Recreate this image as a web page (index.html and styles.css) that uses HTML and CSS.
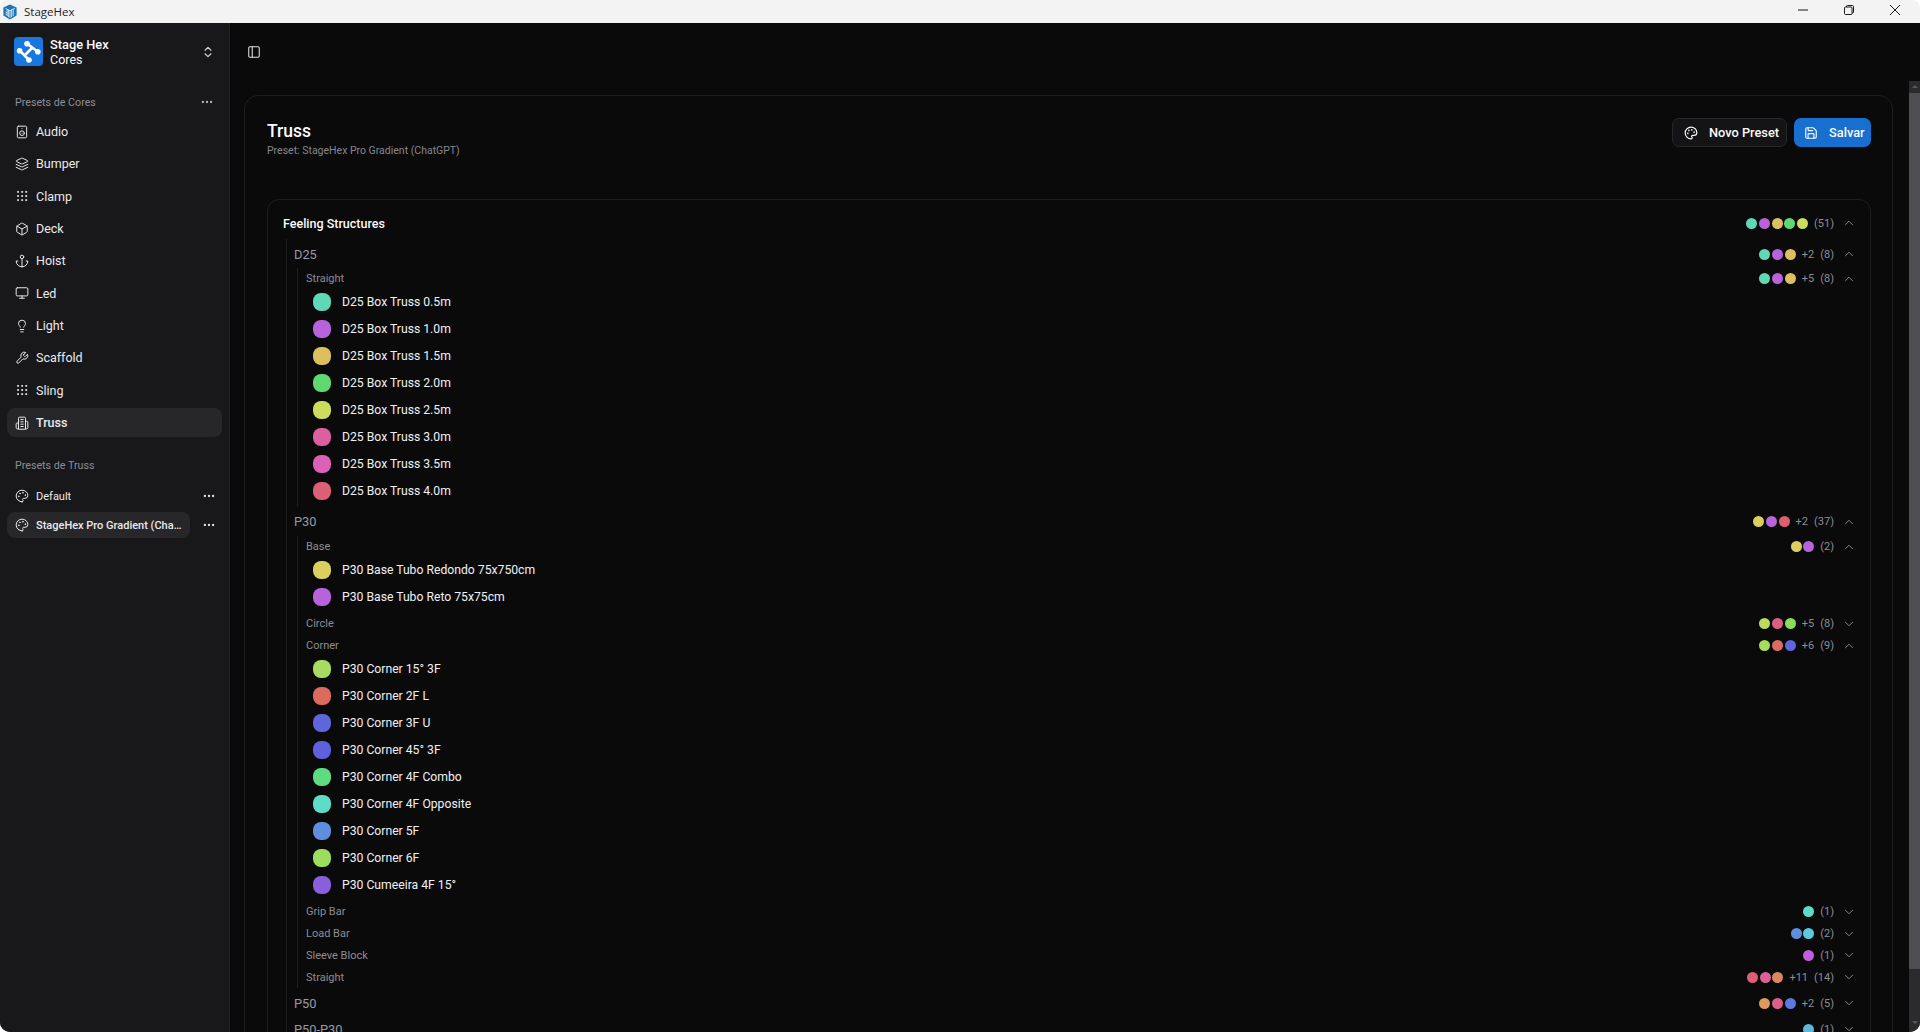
FILE: index.html
```html
<!DOCTYPE html>
<html lang="pt-BR">
<head>
<meta charset="utf-8">
<title>StageHex</title>
<link rel="stylesheet" href="styles.css">
</head>
<body>
<svg class="defs" aria-hidden="true">
  <defs>
    <symbol id="i-speaker" viewBox="0 0 24 24"><rect x="4" y="2" width="16" height="20" rx="2"/><path d="M12 6h.01"/><circle cx="12" cy="14" r="4"/><path d="M12 14h.01"/></symbol>
    <symbol id="i-layers" viewBox="0 0 24 24"><path d="m12.83 2.18a2 2 0 0 0-1.66 0L2.6 6.08a1 1 0 0 0 0 1.83l8.58 3.91a2 2 0 0 0 1.66 0l8.58-3.9a1 1 0 0 0 0-1.83Z"/><path d="m22 17.65-9.17 4.16a2 2 0 0 1-1.66 0L2 17.65"/><path d="m22 12.65-9.17 4.16a2 2 0 0 1-1.66 0L2 12.65"/></symbol>
    <symbol id="i-grip" viewBox="0 0 24 24"><circle cx="12" cy="12" r="1"/><circle cx="19" cy="12" r="1"/><circle cx="5" cy="12" r="1"/><circle cx="12" cy="5" r="1"/><circle cx="19" cy="5" r="1"/><circle cx="5" cy="5" r="1"/><circle cx="12" cy="19" r="1"/><circle cx="19" cy="19" r="1"/><circle cx="5" cy="19" r="1"/></symbol>
    <symbol id="i-box" viewBox="0 0 24 24"><path d="M21 8a2 2 0 0 0-1-1.73l-7-4a2 2 0 0 0-2 0l-7 4A2 2 0 0 0 3 8v8a2 2 0 0 0 1 1.73l7 4a2 2 0 0 0 2 0l7-4A2 2 0 0 0 21 16Z"/><path d="m3.3 7 8.7 5 8.7-5"/><path d="M12 22V12"/></symbol>
    <symbol id="i-anchor" viewBox="0 0 24 24"><path d="M12 22V8"/><path d="M5 12H2a10 10 0 0 0 20 0h-3"/><circle cx="12" cy="5" r="3"/></symbol>
    <symbol id="i-monitor" viewBox="0 0 24 24"><rect x="2" y="3" width="20" height="14" rx="2"/><path d="M8 21h8"/><path d="M12 17v4"/></symbol>
    <symbol id="i-bulb" viewBox="0 0 24 24"><path d="M15 14c.2-1 .7-1.7 1.5-2.5 1-.9 1.5-2.2 1.5-3.5A6 6 0 0 0 6 8c0 1 .2 2.2 1.5 3.5.7.7 1.3 1.5 1.5 2.5"/><path d="M9 18h6"/><path d="M10 22h4"/></symbol>
    <symbol id="i-wrench" viewBox="0 0 24 24"><path d="M14.7 6.3a1 1 0 0 0 0 1.4l1.6 1.6a1 1 0 0 0 1.4 0l3.77-3.77a6 6 0 0 1-7.94 7.94l-6.91 6.91a2.12 2.12 0 0 1-3-3l6.91-6.91a6 6 0 0 1 7.94-7.94l-3.76 3.76z"/></symbol>
    <symbol id="i-building" viewBox="0 0 24 24"><path d="M6 22V4a2 2 0 0 1 2-2h8a2 2 0 0 1 2 2v18Z"/><path d="M6 12H4a2 2 0 0 0-2 2v6a2 2 0 0 0 2 2h2"/><path d="M18 9h2a2 2 0 0 1 2 2v9a2 2 0 0 1-2 2h-2"/><path d="M10 6h4"/><path d="M10 10h4"/><path d="M10 14h4"/><path d="M10 18h4"/></symbol>
    <symbol id="i-palette" viewBox="0 0 24 24"><path d="M12 22a1 1 0 0 1 0-20 10 9 0 0 1 10 9 5 5 0 0 1-5 5h-2.25a1.75 1.75 0 0 0-1.4 2.8l.3.4a1.75 1.75 0 0 1-1.4 2.8z"/><circle cx="13.5" cy="6.5" r=".5" fill="currentColor"/><circle cx="17.5" cy="10.5" r=".5" fill="currentColor"/><circle cx="6.5" cy="12.5" r=".5" fill="currentColor"/><circle cx="8.5" cy="7.5" r=".5" fill="currentColor"/></symbol>
    <symbol id="i-save" viewBox="0 0 24 24"><path d="M15.2 3a2 2 0 0 1 1.4.6l3.8 3.8a2 2 0 0 1 .6 1.4V19a2 2 0 0 1-2 2H5a2 2 0 0 1-2-2V5a2 2 0 0 1 2-2z"/><path d="M17 21v-7a1 1 0 0 0-1-1H8a1 1 0 0 0-1 1v7"/><path d="M7 3v4a1 1 0 0 0 1 1h7"/></symbol>
    <symbol id="i-panel" viewBox="0 0 24 24"><rect x="3" y="3" width="18" height="18" rx="2"/><path d="M9 3v18"/></symbol>
    <symbol id="i-updown" viewBox="0 0 24 24"><path d="m7 15 5 5 5-5"/><path d="m7 9 5-5 5 5"/></symbol>
    <symbol id="i-dots" viewBox="0 0 24 24"><circle cx="12" cy="12" r="1"/><circle cx="19" cy="12" r="1"/><circle cx="5" cy="12" r="1"/></symbol>
    <symbol id="i-up" viewBox="0 0 24 24"><path d="m18 15-6-6-6 6"/></symbol>
    <symbol id="i-down" viewBox="0 0 24 24"><path d="m6 9 6 6 6-6"/></symbol>
  </defs>
</svg>

<div class="window">
  <header class="titlebar">
    <div class="titlebar-left">
      <svg class="app-icon" viewBox="0 0 16 16"><path class="app-icon-b" d="M8 .6 14.6 3.4V11.6L8 15.4 1.4 11.6V3.4Z"/><path class="app-icon-l" d="M3.5 4.5 8 6.6 12.8 4.3M8 6.6V14M5.2 5.2V12M6.6 5.9V13M9.6 5.9V13M11.2 5.2V12M3.5 8 5 8.8M3.5 10 5 10.8"/></svg>
      <span class="titlebar-name">StageHex</span>
    </div>
    <div class="win-controls">
      <svg class="win-btn" viewBox="0 0 10 10"><path d="M0 5h10"/></svg>
      <svg class="win-btn" viewBox="0 0 10 10"><rect x=".5" y="2" width="7.5" height="7.5" rx="1"/><path d="M2.5 2V1.500a1 1 0 0 1 1-1H8.500a1 1 0 0 1 1 1V7a1 1 0 0 1-1 1H8"/></svg>
      <svg class="win-btn" viewBox="0 0 10 10"><path d="M0 0 10 10M10 0 0 10"/></svg>
    </div>
  </header>

  <div class="shell">
    <aside class="sidebar">
      <div class="brand">
        <div class="brand-logo">
          <svg viewBox="0 0 29 29">
            <path class="brand-line" d="M13.300 6.800 23.800 14.700M5.800 13.700 15 23M18 11 10.500 18.500"/>
            <circle class="brand-node" cx="13" cy="6.800" r="2.800"/>
            <circle class="brand-node" cx="23.800" cy="14.700" r="2.800"/>
            <circle class="brand-node" cx="5.600" cy="13.800" r="2.800"/>
            <circle class="brand-node" cx="15" cy="23" r="2.800"/>
          </svg>
        </div>
        <div class="brand-text"><strong>Stage Hex</strong><span>Cores</span></div>
        <svg class="ico brand-updown"><use href="#i-updown"/></svg>
      </div>

      <div class="group-label">Presets de Cores <svg class="ico label-dots"><use href="#i-dots"/></svg></div>
      <nav class="nav">
        <a class="nav-item"><svg class="ico"><use href="#i-speaker"/></svg>Audio</a>
        <a class="nav-item"><svg class="ico"><use href="#i-layers"/></svg>Bumper</a>
        <a class="nav-item"><svg class="ico"><use href="#i-grip"/></svg>Clamp</a>
        <a class="nav-item"><svg class="ico"><use href="#i-box"/></svg>Deck</a>
        <a class="nav-item"><svg class="ico"><use href="#i-anchor"/></svg>Hoist</a>
        <a class="nav-item"><svg class="ico"><use href="#i-monitor"/></svg>Led</a>
        <a class="nav-item"><svg class="ico"><use href="#i-bulb"/></svg>Light</a>
        <a class="nav-item"><svg class="ico"><use href="#i-wrench"/></svg>Scaffold</a>
        <a class="nav-item"><svg class="ico"><use href="#i-grip"/></svg>Sling</a>
        <a class="nav-item is-active"><svg class="ico"><use href="#i-building"/></svg>Truss</a>
      </nav>

      <div class="group-label group-label-second">Presets de Truss</div>
      <div class="presets">
        <div class="preset-row">
          <a class="preset"><svg class="ico"><use href="#i-palette"/></svg><span class="preset-name">Default</span></a>
          <svg class="ico preset-dots"><use href="#i-dots"/></svg>
        </div>
        <div class="preset-row">
          <a class="preset is-active"><svg class="ico"><use href="#i-palette"/></svg><span class="preset-name">StageHex Pro Gradient (ChatGPT)</span></a>
          <svg class="ico preset-dots"><use href="#i-dots"/></svg>
        </div>
      </div>
    </aside>

    <main class="main">
      <div class="topbar"><svg class="ico topbar-toggle"><use href="#i-panel"/></svg></div>
      <div class="scroller">
        <section class="card">
          <div class="card-head">
            <div>
              <h1 class="card-title">Truss</h1>
              <p class="card-sub">Preset: StageHex Pro Gradient (ChatGPT)</p>
            </div>
            <div class="actions">
              <button class="btn btn-outline"><svg class="ico"><use href="#i-palette"/></svg>Novo Preset</button>
              <button class="btn btn-primary"><svg class="ico"><use href="#i-save"/></svg>Salvar</button>
            </div>
          </div>

          <div class="tree">
            <div class="row row-root">
              <span>Feeling Structures</span>
              <div class="sum"><span class="dots"><i style="background:#5fd9b5"></i><i style="background:#b862db"></i><i style="background:#dcbf5f"></i><i style="background:#5fd96f"></i><i style="background:#cddc5f"></i></span><span class="count">(51)</span><svg class="ico chev"><use href="#i-up"/></svg></div>
            </div>
            <div class="level1">
              <div class="row row-family">
                <span>D25</span>
                <div class="sum"><span class="dots"><i style="background:#5fd9b5"></i><i style="background:#b862db"></i><i style="background:#dcbf5f"></i></span><span class="more">+2</span><span class="count">(8)</span><svg class="ico chev"><use href="#i-up"/></svg></div>
              </div>
              <div class="level2">
                <div class="row row-group">
                  <span>Straight</span>
                  <div class="sum"><span class="dots"><i style="background:#5fd9b5"></i><i style="background:#b862db"></i><i style="background:#dcbf5f"></i></span><span class="more">+5</span><span class="count">(8)</span><svg class="ico chev"><use href="#i-up"/></svg></div>
                </div>
                <div class="items">
                  <div class="item"><i class="swatch" style="background:#5fd9b5"></i>D25 Box Truss 0.5m</div>
                  <div class="item"><i class="swatch" style="background:#b862db"></i>D25 Box Truss 1.0m</div>
                  <div class="item"><i class="swatch" style="background:#dcbf5f"></i>D25 Box Truss 1.5m</div>
                  <div class="item"><i class="swatch" style="background:#5fd96f"></i>D25 Box Truss 2.0m</div>
                  <div class="item"><i class="swatch" style="background:#cddc5f"></i>D25 Box Truss 2.5m</div>
                  <div class="item"><i class="swatch" style="background:#dc5fa0"></i>D25 Box Truss 3.0m</div>
                  <div class="item"><i class="swatch" style="background:#dc5fb8"></i>D25 Box Truss 3.5m</div>
                  <div class="item"><i class="swatch" style="background:#dc5f78"></i>D25 Box Truss 4.0m</div>
                </div>
              </div>

              <div class="row row-family">
                <span>P30</span>
                <div class="sum"><span class="dots"><i style="background:#dccf5f"></i><i style="background:#b862db"></i><i style="background:#dc5f70"></i></span><span class="more">+2</span><span class="count">(37)</span><svg class="ico chev"><use href="#i-up"/></svg></div>
              </div>
              <div class="level2">
                <div class="row row-group">
                  <span>Base</span>
                  <div class="sum"><span class="dots"><i style="background:#dccf5f"></i><i style="background:#b862db"></i></span><span class="count">(2)</span><svg class="ico chev"><use href="#i-up"/></svg></div>
                </div>
                <div class="items">
                  <div class="item"><i class="swatch" style="background:#dccf5f"></i>P30 Base Tubo Redondo 75x750cm</div>
                  <div class="item"><i class="swatch" style="background:#b862db"></i>P30 Base Tubo Reto 75x75cm</div>
                </div>
                <div class="row row-group">
                  <span>Circle</span>
                  <div class="sum"><span class="dots"><i style="background:#bbdc5f"></i><i style="background:#dc5f80"></i><i style="background:#8adc5f"></i></span><span class="more">+5</span><span class="count">(8)</span><svg class="ico chev"><use href="#i-down"/></svg></div>
                </div>
                <div class="row row-group">
                  <span>Corner</span>
                  <div class="sum"><span class="dots"><i style="background:#a8dc5f"></i><i style="background:#dc6a5f"></i><i style="background:#5f66dc"></i></span><span class="more">+6</span><span class="count">(9)</span><svg class="ico chev"><use href="#i-up"/></svg></div>
                </div>
                <div class="items">
                  <div class="item"><i class="swatch" style="background:#a8dc5f"></i>P30 Corner 15° 3F</div>
                  <div class="item"><i class="swatch" style="background:#dc6a5f"></i>P30 Corner 2F L</div>
                  <div class="item"><i class="swatch" style="background:#5f66dc"></i>P30 Corner 3F U</div>
                  <div class="item"><i class="swatch" style="background:#5f60dc"></i>P30 Corner 45° 3F</div>
                  <div class="item"><i class="swatch" style="background:#5fdc82"></i>P30 Corner 4F Combo</div>
                  <div class="item"><i class="swatch" style="background:#5fdcc8"></i>P30 Corner 4F Opposite</div>
                  <div class="item"><i class="swatch" style="background:#5f8fdc"></i>P30 Corner 5F</div>
                  <div class="item"><i class="swatch" style="background:#9cdc5f"></i>P30 Corner 6F</div>
                  <div class="item"><i class="swatch" style="background:#8a5fdc"></i>P30 Cumeeira 4F 15°</div>
                </div>
                <div class="row row-group">
                  <span>Grip Bar</span>
                  <div class="sum"><span class="dots"><i style="background:#5fdcc8"></i></span><span class="count">(1)</span><svg class="ico chev"><use href="#i-down"/></svg></div>
                </div>
                <div class="row row-group">
                  <span>Load Bar</span>
                  <div class="sum"><span class="dots"><i style="background:#5f8fdc"></i><i style="background:#5fc8dc"></i></span><span class="count">(2)</span><svg class="ico chev"><use href="#i-down"/></svg></div>
                </div>
                <div class="row row-group">
                  <span>Sleeve Block</span>
                  <div class="sum"><span class="dots"><i style="background:#c05fdc"></i></span><span class="count">(1)</span><svg class="ico chev"><use href="#i-down"/></svg></div>
                </div>
                <div class="row row-group">
                  <span>Straight</span>
                  <div class="sum"><span class="dots"><i style="background:#dc5f75"></i><i style="background:#dc5f95"></i><i style="background:#dc885f"></i></span><span class="more">+11</span><span class="count">(14)</span><svg class="ico chev"><use href="#i-down"/></svg></div>
                </div>
              </div>

              <div class="row row-family">
                <span>P50</span>
                <div class="sum"><span class="dots"><i style="background:#dc9a5f"></i><i style="background:#dc5f8a"></i><i style="background:#5f78dc"></i></span><span class="more">+2</span><span class="count">(5)</span><svg class="ico chev"><use href="#i-down"/></svg></div>
              </div>
              <div class="row row-family">
                <span>P50-P30</span>
                <div class="sum"><span class="dots"><i style="background:#5fb8dc"></i></span><span class="count">(1)</span><svg class="ico chev"><use href="#i-down"/></svg></div>
              </div>
            </div>
          </div>
        </section>
      </div>
      <div class="scrollbar" aria-hidden="true">
        <span class="sb-arrow sb-arrow-up"></span>
        <span class="sb-thumb"></span>
        <span class="sb-arrow sb-arrow-down"></span>
      </div>
    </main>
  </div>
</div>
</body>
</html>
```

FILE: styles.css
```css
* { box-sizing: border-box; }

html, body {
  margin: 0;
  height: 100%;
  overflow: hidden;
  background: #ffffff;
}

body {
  font-family: "Roboto", "Liberation Sans", sans-serif;
  color: #fafafa;
}

.defs { position: absolute; width: 0; height: 0; }

.ico {
  width: 14px;
  height: 14px;
  flex: none;
  fill: none;
  stroke: currentColor;
  stroke-width: 2;
  stroke-linecap: round;
  stroke-linejoin: round;
}

.window {
  height: 1032px;
  display: flex;
  flex-direction: column;
}

/* Title bar */
.titlebar {
  height: 23px;
  flex: none;
  display: flex;
  align-items: center;
  justify-content: space-between;
  background: #f3f3f3;
  border-radius: 8px 8px 0 0;
  color: #1b1b1b;
}

.titlebar-left { display: flex; align-items: center; padding-left: 2px; }

.app-icon { width: 16px; height: 16px; }
.app-icon-b { fill: #1d75b8; }
.app-icon-l { fill: none; stroke: #d8ecf8; stroke-width: .9; }

.titlebar-name {
  margin-left: 6px;
  font-family: "Open Sans", "Noto Sans", sans-serif;
  font-size: 11.500px;
}

.win-controls {
  display: flex;
  align-items: center;
  gap: 36px;
  padding-right: 20px;
  margin-bottom: 3px;
}

.win-btn {
  width: 10px;
  height: 10px;
  fill: none;
  stroke: #1b1b1b;
  stroke-width: 1;
}

/* Shell */
.shell {
  flex: 1;
  min-height: 0;
  display: flex;
  overflow: hidden;
  border-radius: 0 0 10px 10px;
  background: #0a0a0a;
}

/* Sidebar */
.sidebar {
  width: 230px;
  flex: none;
  background: #18181b;
  border-right: 1px solid #232326;
  padding: 14px 7px 0;
}

.brand {
  height: 29px;
  display: flex;
  align-items: center;
  padding-left: 7px;
}

.brand-logo {
  width: 29px;
  height: 29px;
  flex: none;
  background: #1878e0;
  border-radius: 4px;
}

.brand-logo svg { display: block; width: 29px; height: 29px; }

.brand-line {
  fill: none;
  stroke: #ffffff;
  stroke-width: 2.600;
}

.brand-node { fill: #ffffff; }

.brand-text {
  flex: 1;
  margin-left: 7px;
  display: flex;
  flex-direction: column;
  font-size: 12.500px;
  line-height: 15px;
}

.brand-text strong { font-size: 12.800px; font-weight: 500; }
.brand-text span { font-weight: 400; }

.brand-updown { margin-right: 7px; color: #d4d4d8; }

.group-label {
  height: 24px;
  margin-top: 24px;
  padding: 0 8px;
  display: flex;
  align-items: center;
  justify-content: space-between;
  font-size: 10.700px;
  font-weight: 400;
  color: #8d8d95;
}

.group-label-second { margin-top: 16px; }

.label-dots { color: #b4b4ba; }

.nav {
  margin-top: 3px;
  display: flex;
  flex-direction: column;
  gap: 3.350px;
}

.nav-item {
  height: 29px;
  display: flex;
  align-items: center;
  gap: 7px;
  padding: 0 8px;
  border-radius: 8px;
  font-size: 12.500px;
  color: #eaeaec;
}

.nav-item .ico { stroke-width: 1.7; }

.nav-item.is-active {
  background: #27272a;
  font-weight: 500;
}

.presets {
  margin-top: 6px;
  display: flex;
  flex-direction: column;
  gap: 3px;
}

.preset-row {
  height: 26px;
  display: flex;
  align-items: center;
}

.preset {
  width: 183px;
  height: 26px;
  display: flex;
  align-items: center;
  gap: 7px;
  padding: 0 8px;
  border-radius: 8px;
  font-size: 11px;
  font-weight: 400;
  color: #eaeaec;
}

.preset .ico { stroke-width: 1.7; }

.preset.is-active {
  background: #27272a;
  font-weight: 500;
}

.preset-name {
  min-width: 0;
  white-space: nowrap;
  overflow: hidden;
  text-overflow: ellipsis;
}

.preset-dots { margin-left: 12px; color: #e4e4e7; }

/* Main */
.main {
  flex: 1;
  min-width: 0;
  position: relative;
  display: flex;
  flex-direction: column;
}

.topbar {
  height: 58px;
  flex: none;
  display: flex;
  align-items: center;
  padding-left: 17px;
}

.topbar-toggle { color: #e4e4e7; stroke-width: 1.8; }

.scroller {
  flex: 1;
  min-height: 0;
  overflow: hidden;
  padding: 14px 27px 20px 14px;
}

.scrollbar {
  position: absolute;
  top: 58px;
  right: 0;
  bottom: 0;
  width: 11px;
  background: #2b2b2d;
  display: flex;
  flex-direction: column;
  align-items: center;
}

.sb-thumb {
  width: 100%;
  height: 876px;
  margin-top: 5px;
  background: #4d4d52;
}

.sb-arrow {
  flex: none;
  width: 0;
  height: 0;
  border-left: 3px solid transparent;
  border-right: 3px solid transparent;
}

.sb-arrow-up {
  margin-top: 4px;
  border-bottom: 3px solid #58585c;
}

.sb-arrow-down {
  margin-top: 52px;
  border-top: 3px solid #58585c;
}

.card {
  border: 1px solid #1f1f22;
  border-radius: 14px;
  padding: 22px 21px 22px 22px;
  background: #0a0a0a;
}

.card-head {
  display: flex;
  justify-content: space-between;
  align-items: flex-start;
  height: 81px;
}

.card-title {
  margin: 2px 0 0;
  font-size: 17.500px;
  line-height: 22px;
  font-weight: 500;
  color: #fafafa;
}

.card-sub {
  margin: 1px 0 0;
  font-size: 10.500px;
  line-height: 15px;
  color: #86868e;
}

.actions { display: flex; gap: 7px; }

.btn {
  height: 29px;
  padding: 0 0 0 11px;
  display: flex;
  align-items: center;
  gap: 11px;
  border-radius: 7px;
  font-family: inherit;
  font-size: 12.800px;
  font-weight: 500;
  color: #fafafa;
  white-space: nowrap;
}

.btn-outline {
  width: 115px;
  border: 1px solid #27272a;
  background: #141416;
}

.btn-primary {
  width: 77px;
  padding-left: 10px;
  border: 0;
  background: #1770d0;
}

/* Tree */
.tree {
  border: 1px solid #1f1f22;
  border-radius: 12px;
  padding: 12px 15px 20px;
}

.row {
  display: flex;
  align-items: center;
  justify-content: space-between;
}

.row-root {
  height: 22px;
  font-size: 12.500px;
  font-weight: 500;
  color: #fafafa;
}

.level1 {
  margin: 5px 0 0 3px;
  padding: 4px 0 0 7px;
  border-left: 1px solid #1c1c1f;
  display: flex;
  flex-direction: column;
}

.row-family {
  height: 22px;
  font-size: 12.800px;
  color: #9a9aa2;
}

.row-family + .row-family { margin-top: 4px; }

.level2 {
  margin: 3px 0 4px 3px;
  padding: 2px 0 2px 8px;
  border-left: 1px solid #1c1c1f;
  display: flex;
  flex-direction: column;
}

.row-group {
  height: 17.750px;
  font-size: 11px;
  color: #8d8d95;
}

.row-group + .row-group { margin-top: 4px; }
.items + .row-group { margin-top: 4.500px; }

.items {
  display: flex;
  flex-direction: column;
  padding: 1px 0 0 7px;
}

.item {
  height: 27px;
  display: flex;
  align-items: center;
  gap: 11px;
  font-size: 12.200px;
  color: #f0f0f2;
}

.swatch {
  width: 18px;
  height: 18px;
  flex: none;
  border-radius: 8px;
}

.sum {
  display: flex;
  align-items: center;
  font-size: 11px;
  font-weight: 400;
  color: #8d8d95;
}

.dots { display: flex; gap: 1.700px; }

.dots i {
  width: 11px;
  height: 11px;
  border-radius: 50%;
}

.more { margin-left: 6px; }
.count { margin-left: 6px; }

.chev {
  width: 14px;
  height: 14px;
  margin: 0 -1px 0 8px;
  stroke-width: 1.600;
  color: #8d8d95;
}
```
